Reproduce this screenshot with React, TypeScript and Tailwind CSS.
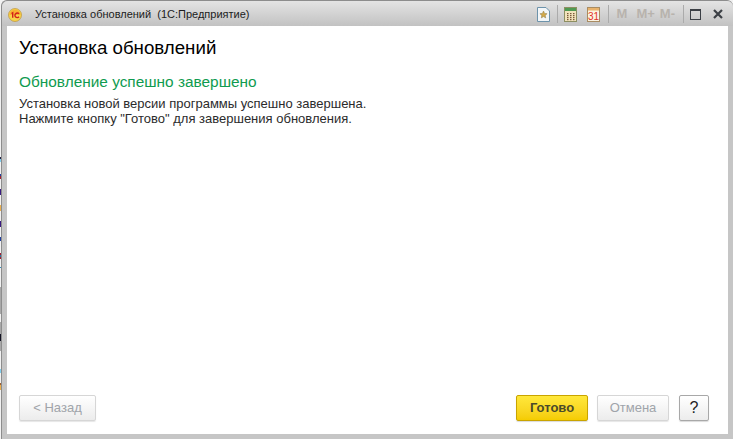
import React from 'react';

// coloured bits of the desktop that show behind the window's left edge
const desktopBits: [number, string][] = [
  [17, 'transparent'], [2, '#222244'], [3, '#7fd0f0'], [12, 'transparent'], [2, '#2040a0'], [3, '#a02030'],
  [10, 'transparent'], [6, '#3a1a80'], [10, 'transparent'], [6, '#eab050'], [10, 'transparent'], [6, '#3a1a80'],
  [10, 'transparent'], [4, '#2040a0'], [12, 'transparent'], [2, '#a02030'], [2, '#3070a0'], [2, '#a02030'],
  [8, 'transparent'], [1, '#3090c0'], [19, 'transparent'], [27, '#a8a8a8'], [8, 'transparent'], [12, '#a8a8a8'],
  [7, '#111122'], [10, '#a8a8a8'], [18, 'transparent'], [4, '#7fd0f0'], [10, 'transparent'], [2, '#a06030'], [5, '#eab050'],
];

function Logo() {
  return (
    <svg width="14" height="14" viewBox="0 0 14 14" className="mt-px shrink-0">
      <circle cx="7" cy="7" r="6.5" fill="#f7d24a" stroke="#b98a2a" strokeWidth="0.6" />
      <path d="M1.500 7a5.500 5.500 0 0 1 11 0z" fill="#f9b233" />
      <path d="M3.500 5.500l1.200-.8v5M11 5.800a2.300 2.300 0 1 0 0 3" fill="none" stroke="#d3211a" strokeWidth="1.400" />
    </svg>
  );
}

function FavIcon() {
  return (
    <svg width="13" height="15" viewBox="0 0 13 15">
      <path d="M.5.5h8.500l3.500 3.500v10.500h-12z" fill="#f3f6f8" stroke="#6d93ab" />
      <path d="M6.500 4l1.100 2.400 2.500.3-1.900 1.700.5 2.500-2.200-1.300-2.200 1.300.5-2.500-1.900-1.700 2.500-.3z" fill="#d2a94a" stroke="#8f7a45" strokeWidth="0.5" />
    </svg>
  );
}

function CalcIcon() {
  return (
    <svg width="13" height="15" viewBox="0 0 13 15">
      <rect x="0.500" y="0.500" width="12" height="14" fill="#f2e3bc" stroke="#8d8f62" />
      <rect x="1" y="1" width="11" height="3" fill="#4f9a52" />
      {[6, 8, 10, 12].map((y) =>
        [3, 6, 9].map((x) => <rect key={`${x}-${y}`} x={x} y={y} width="1.500" height="1.200" fill="#7a5a3a" />)
      )}
    </svg>
  );
}

function CalendarIcon() {
  return (
    <svg width="13" height="15" viewBox="0 0 13 15">
      <rect x="0.500" y="0.500" width="12" height="14" fill="#fbf3e2" stroke="#a98c62" />
      <rect x="1" y="1" width="11" height="2.500" fill="#e9b36c" />
      <text x="6.500" y="12.800" textAnchor="middle" fontSize="10" fill="#e2321f" fontFamily="'Liberation Sans', sans-serif">31</text>
    </svg>
  );
}

function Divider() {
  return <div className="h-[18px] w-px bg-[#ababab]" />;
}

export default function App() {
  return (
    <div className="flex h-[439px] w-[733px] overflow-hidden bg-[#f2f2f2] font-['Liberation_Sans',Arial,sans-serif]">
      {/* desktop strip behind the window */}
      <div className="flex w-px shrink-0 flex-col pt-[140px]">
        {desktopBits.map(([h, color], i) => (
          <div key={i} className="w-px shrink-0" style={{ height: h, backgroundColor: color }} />
        ))}
      </div>
      <div className="flex min-w-0 flex-1 flex-col rounded-t-[6px] border-l border-t border-[#8d8d8d] bg-[#c6c6c6]">
        {/* Title bar */}
        <div className="flex h-[25px] shrink-0 items-center rounded-t-[6px] bg-gradient-to-b from-[#e4e4e4] to-[#c2c2c2] pl-[6px] pr-[10px] pt-[1px]">
          <Logo />
          <span className="ml-[13px] whitespace-pre text-[11px] text-[#1c1c1c]">Установка обновлений  (1C:Предприятие)</span>
          <div className="ml-auto flex items-center">
            <FavIcon />
            <div className="ml-[7px]"><Divider /></div>
            <div className="ml-[6px]"><CalcIcon /></div>
            <div className="ml-[10px]"><CalendarIcon /></div>
            <div className="ml-[8px]"><Divider /></div>
            <div className="ml-[8px] flex text-[13px] font-bold text-[#b8b3ad]">
              <span>M</span>
              <span className="ml-[9px]">M+</span>
              <span className="ml-[5px]">M-</span>
            </div>
            <div className="ml-[8px]"><Divider /></div>
            <div className="ml-[6px] h-[11px] w-[11px] border border-t-2 border-[#3b3f45]" />
            <svg width="10" height="10" viewBox="0 0 10 10" className="ml-[12px]">
              <path d="M1 1l8 8M9 1l-8 8" stroke="#3b3f45" strokeWidth="2.200" />
            </svg>
          </div>
        </div>

        {/* Form */}
        <div className="ml-[5px] mr-[5px] mb-[5px] flex min-h-0 flex-1 flex-col bg-white pl-[12px] pr-[19px] pb-[13px]">
          <h1 className="mt-[11px] text-[18.7px] leading-[22px] text-black">Установка обновлений</h1>
          <h2 className="mt-[14px] text-[15.4px] leading-[18px] text-[#0f9b4f]">Обновление успешно завершено</h2>
          <p className="mt-[5px] text-[13px] leading-[15px] text-[#2b2b2b]">
            Установка новой версии программы успешно завершена.
            <br />
            Нажмите кнопку "Готово" для завершения обновления.
          </p>

          {/* Buttons */}
          <div className="mt-auto flex items-center text-[13px]">
            <button className="h-[26px] w-[77px] rounded-[2px] border border-[#d6d6d6] bg-gradient-to-b from-white to-[#ececec] text-[#a0a4aa] shadow-[0_1px_1px_rgba(0,0,0,0.1)]">&lt; Назад</button>
            <button className="ml-auto h-[26px] w-[72px] rounded-[2px] border border-[#c9a400] bg-gradient-to-b from-[#ffe83a] to-[#f5cc00] font-bold text-[#4a4a2a] shadow-[0_1px_1px_rgba(0,0,0,0.15)]">Готово</button>
            <button className="ml-[9px] h-[26px] w-[72px] rounded-[2px] border border-[#d6d6d6] bg-gradient-to-b from-white to-[#ececec] text-[#a0a4aa] shadow-[0_1px_1px_rgba(0,0,0,0.1)]">Отмена</button>
            <button className="ml-[10px] h-[26px] w-[30px] rounded-[2px] border border-[#a8a8a8] bg-gradient-to-b from-white to-[#ececec] text-[16px] text-[#222] shadow-[0_1px_1px_rgba(0,0,0,0.15)]">?</button>
          </div>
        </div>
      </div>
    </div>
  );
}
